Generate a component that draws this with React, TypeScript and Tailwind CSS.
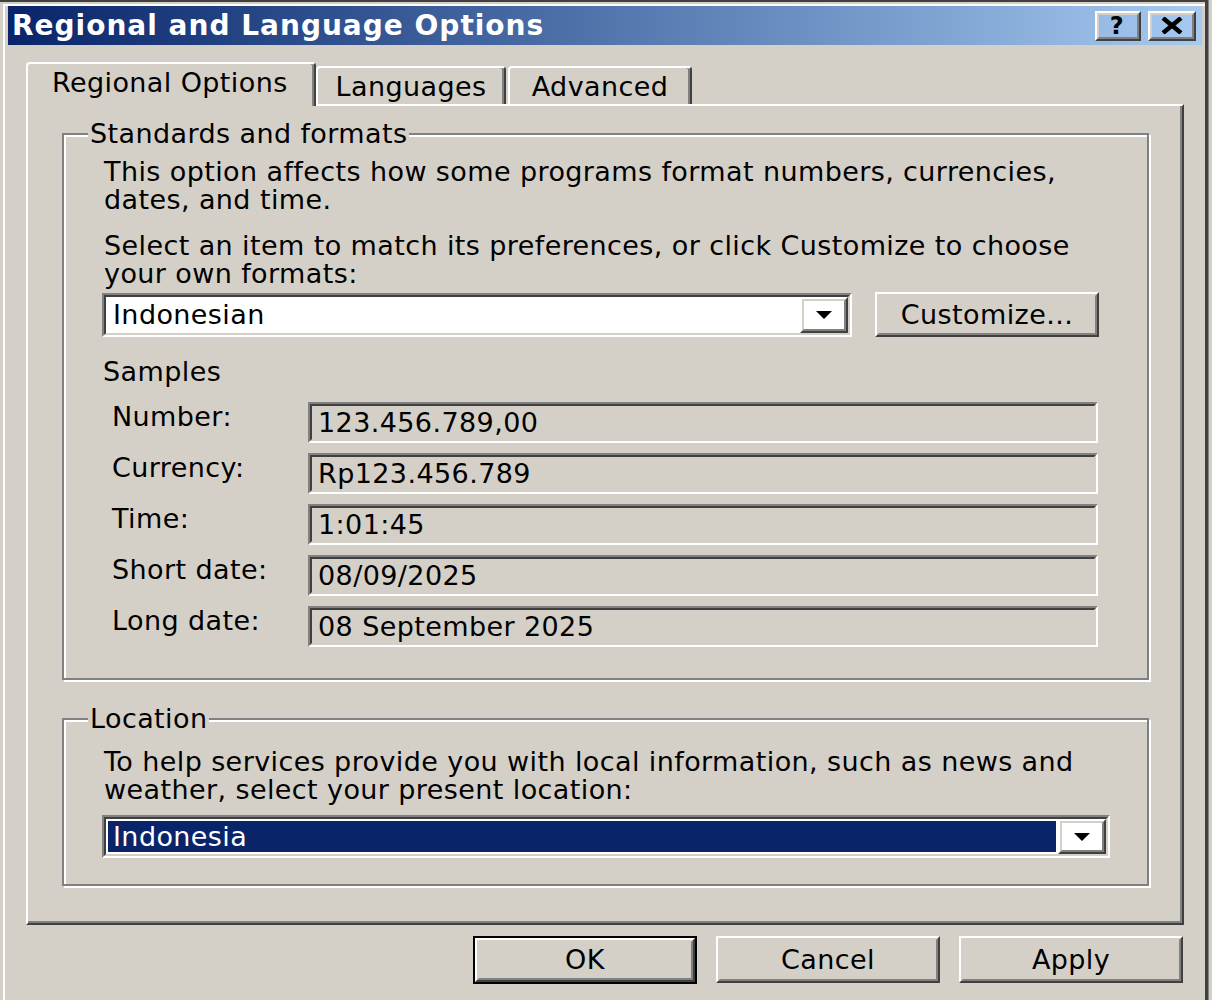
import React from "react";

type Kids = { children?: React.ReactNode; className?: string };

// classic 3D edges, drawn ~2.5x like the screenshot
function Raised({ children, className = "" }: Kids) {
  return (
    <div className={`border-2 border-t-white border-l-white border-r-[#404040] border-b-[#404040] ${className}`}>
      <div className="h-full w-full border-2 border-t-[#d4d0c8] border-l-[#d4d0c8] border-r-[#808080] border-b-[#808080] flex items-center justify-center">
        {children}
      </div>
    </div>
  );
}

function Sunken({ children, className = "", inner = "" }: Kids & { inner?: string }) {
  return (
    <div className={`border-2 border-t-[#808080] border-l-[#808080] border-r-white border-b-white ${className}`}>
      <div className={`h-full w-full border-2 border-t-[#404040] border-l-[#404040] border-r-[#d4d0c8] border-b-[#d4d0c8] flex ${inner}`}>
        {children}
      </div>
    </div>
  );
}

function Arrow() {
  return (
    <svg width="16" height="8" viewBox="0 0 16 8">
      <polygon points="0,0 16,0 8,8" fill="#000" />
    </svg>
  );
}

function Group({ label, children, className = "" }: Kids & { label: string }) {
  return (
    <div className={`relative border-2 border-[#808080] shadow-[inset_2px_2px_0_#fff,2px_2px_0_#fff] ${className}`}>
      <span className="absolute left-[24px] -top-[15px] px-[2px] bg-[#d4d0c8] leading-[28px]">{label}</span>
      {children}
    </div>
  );
}

function Btn({ children, w = "w-[224px]", def = false }: Kids & { w?: string; def?: boolean }) {
  if (def) {
    return (
      <div className={`${w} h-[48px] border-2 border-black`}>
        <Raised className="h-full w-full">{children}</Raised>
      </div>
    );
  }
  return <Raised className={`${w} h-[47px]`}>{children}</Raised>;
}

const samples: [string, string][] = [
  ["Number:", "123.456.789,00"],
  ["Currency:", "Rp123.456.789"],
  ["Time:", "1:01:45"],
  ["Short date:", "08/09/2025"],
  ["Long date:", "08 September 2025"],
];

export default function App() {
  return (
    <div className="w-[1212px] h-[1000px] bg-[#d4d0c8] flex overflow-hidden font-['DejaVu_Sans',sans-serif] text-[27px] leading-[28px] tracking-[0.4px] text-black">
      <div className="w-[1208px] h-[1000px] shrink-0 border-t-2 border-t-[#404040] border-r-[3px] border-r-[#404040] shadow-[inset_3px_2px_0_#d4d0c8,inset_5px_4px_0_#fff]">
        {/* title bar */}
        <div className="ml-[8px] mt-[4px] w-[1194px] h-[39px] bg-gradient-to-r from-[#0a246a] to-[#a6caf0] flex items-center pl-[4px] pr-[6px]">
          <span className="text-white font-bold text-[28px] tracking-[1px]">Regional and Language Options</span>
          <div className="ml-auto flex gap-[7px]">
            <Raised className="w-[46px] h-[30px]">
              <span className="font-bold text-[24px] leading-none -ml-[2px]">?</span>
            </Raised>
            <Raised className="w-[48px] h-[30px]">
              <svg width="22" height="17" viewBox="0 0 22 17">
                <path d="M2 1 L20 16 M20 1 L2 16" stroke="#000" strokeWidth="4.5" />
              </svg>
            </Raised>
          </div>
        </div>

        {/* tabs */}
        <div className="relative z-10 ml-[26px] mt-[17px] -mb-[2px] h-[44px] flex items-end">
          <div className="w-[290px] h-[44px] pt-[5px] pl-[24px] bg-[#d4d0c8] border-l-2 border-t-2 border-l-white border-t-white border-r-2 border-r-[#404040] rounded-t-[4px] shadow-[inset_-2px_0_0_#808080]">
            Regional Options
          </div>
          <div className="w-[190px] h-[38px] mb-[2px] pt-[5px] text-center border-l-2 border-t-2 border-l-white border-t-white border-r-2 border-r-[#404040] rounded-t-[4px] shadow-[inset_-2px_0_0_#808080]">
            Languages
          </div>
          <div className="w-[184px] h-[38px] mb-[2px] ml-[2px] pt-[5px] text-center border-l-2 border-t-2 border-l-white border-t-white border-r-2 border-r-[#404040] rounded-t-[4px] shadow-[inset_-2px_0_0_#808080]">
            Advanced
          </div>
        </div>

        {/* tab panel */}
        <div className="ml-[26px] w-[1158px] h-[821px] border-2 border-t-white border-l-white border-r-[#404040] border-b-[#404040] shadow-[inset_-2px_-2px_0_#808080] pl-[34px] pt-[27px]">
          <Group label="Standards and formats" className="w-[1087px] h-[547px]">
            <div className="pl-[38px] pt-[23px]">
              <p className="pl-[2px]">
                This option affects how some programs format numbers, currencies,
                <br />
                dates, and time.
              </p>
              <p className="pl-[2px] mt-[18px]">
                Select an item to match its preferences, or click Customize to choose
                <br />
                your own formats:
              </p>
              <div className="mt-[5px] flex items-start">
                <Sunken className="w-[750px] h-[44px]" inner="bg-white items-center">
                  <span className="pl-[7px]">Indonesian</span>
                  <Raised className="ml-auto w-[48px] h-full">
                    <Arrow />
                  </Raised>
                </Sunken>
                <div className="ml-[23px] -mt-[1px]">
                  <Raised className="w-[224px] h-[45px]">Customize...</Raised>
                </div>
              </div>
              <p className="mt-[21px] pl-[1px]">Samples</p>
              <div className="mt-[16px] flex flex-col gap-[10px]">
                {samples.map(([k, v]) => (
                  <div key={k} className="flex items-start">
                    <span className="w-[206px] pl-[10px] pt-[1px]">{k}</span>
                    <Sunken className="w-[790px] h-[41px]" inner="items-center">
                      <span className="pl-[6px]">{v}</span>
                    </Sunken>
                  </div>
                ))}
              </div>
            </div>
          </Group>

          <Group label="Location" className="mt-[38px] w-[1087px] h-[168px]">
            <div className="pl-[38px] pt-[28px]">
              <p className="pl-[2px]">
                To help services provide you with local information, such as news and
                <br />
                weather, select your present location:
              </p>
              <Sunken className="mt-[11px] w-[1008px] h-[43px]" inner="bg-white items-stretch">
                <div className="flex-1 m-[2px] bg-[#0a246a] text-white flex items-center pl-[5px]">Indonesia</div>
                <Raised className="w-[48px] h-full">
                  <Arrow />
                </Raised>
              </Sunken>
            </div>
          </Group>
        </div>

        {/* buttons */}
        <div className="ml-[26px] w-[1158px] mt-[11px] flex justify-end gap-[19px] pr-[1px]">
          <Btn def>OK</Btn>
          <Btn>Cancel</Btn>
          <Btn>Apply</Btn>
        </div>
      </div>
      <div className="flex-1 bg-[#d4d0c8] border-l border-[#808080]" />
    </div>
  );
}
